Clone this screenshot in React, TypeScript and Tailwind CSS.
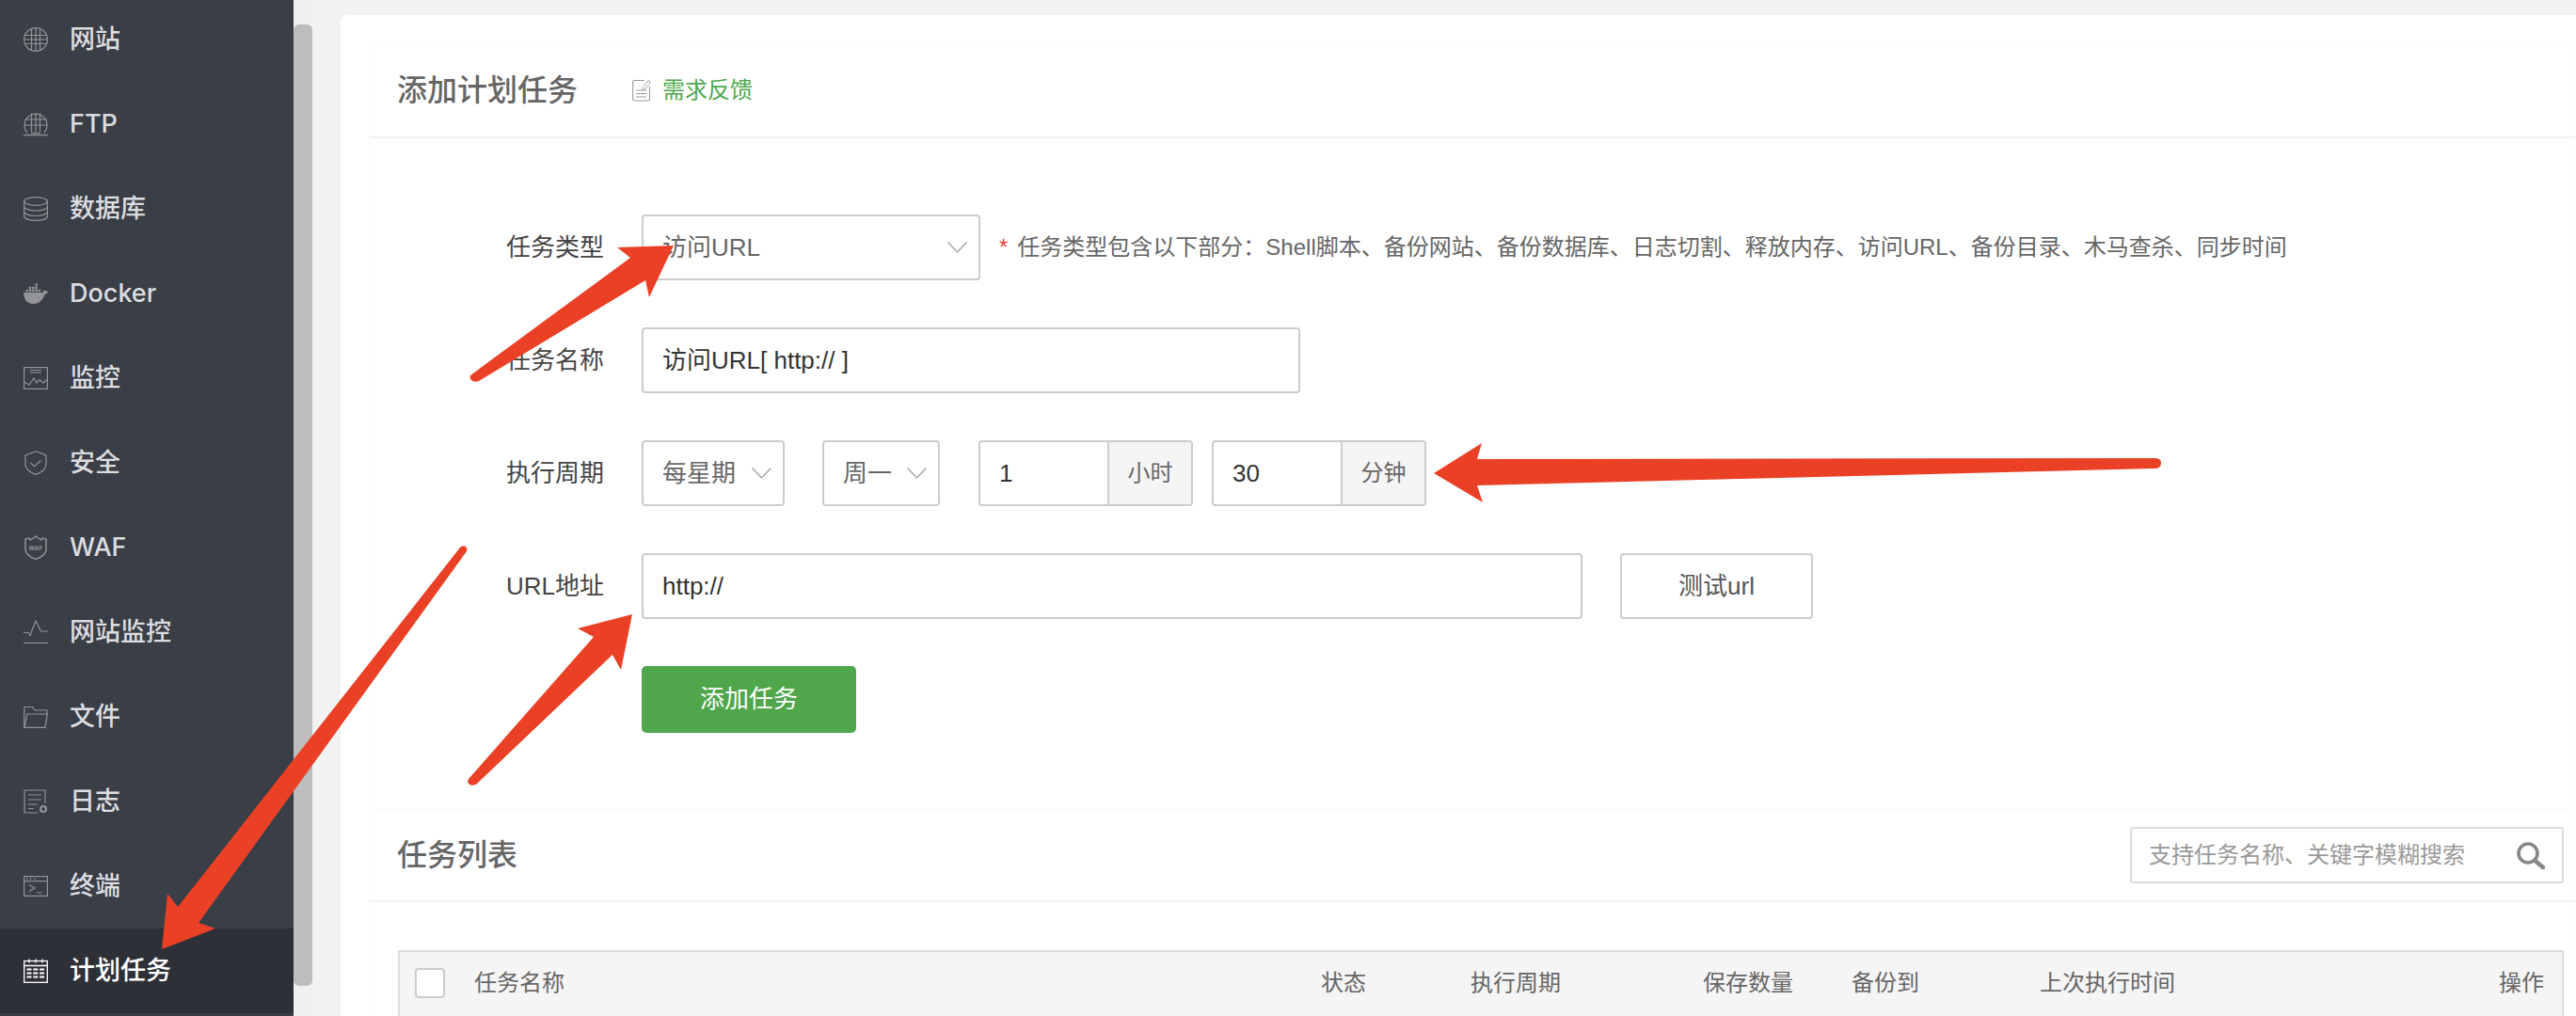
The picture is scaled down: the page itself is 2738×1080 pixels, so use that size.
import React from "react";

const S = { fill: "none", stroke: "currentColor", strokeWidth: 1.2 };

const Ico = ({ children }: { children: React.ReactNode }) => (
  <svg width="26" height="26" viewBox="0 0 26 26" className="shrink-0">
    {children}
  </svg>
);

const icons: Record<string, React.ReactNode> = {
  globe: (
    <Ico>
      <g {...S}>
        <circle cx="13" cy="13" r="12.4" />
        <path d="M1.5 8.5H24.500M.8 13H25.200M1.500 17.500H24.500" />
        <path d="M8.500 1.500V24.500M13 .8V25.200M17.500 1.500V24.500" />
      </g>
    </Ico>
  ),
  ftp: (
    <Ico>
      <g {...S}>
        <path d="M4 22A12 12 0 1 1 22 22" />
        <path d="M1.500 8H24.500M1 14H25M8.500 1.500V21M13 1V21M17.500 1.500V21" />
        <path d="M0 24.500H26" strokeWidth="1.4" />
        <path d="M8 22.500H18" strokeWidth="1.4" />
      </g>
    </Ico>
  ),
  db: (
    <Ico>
      <g {...S}>
        <ellipse cx="13" cy="5" rx="12.400" ry="4.300" />
        <path d="M.6 5V21C.6 23.500 6 25.400 13 25.400S25.400 23.500 25.400 21V5" />
        <path d="M.6 10.500C.6 13 6 15 13 15S25.400 13 25.400 10.500" />
        <path d="M.6 16C.6 18.500 6 20.500 13 20.500S25.400 18.500 25.400 16" />
      </g>
    </Ico>
  ),
  docker: (
    <Ico>
      <g fill="currentColor">
        <path d="M0 12H20.500C21 12 21.500 11 21.300 9.500C23 9.300 25 10.300 26 11.500C25.200 13 23.800 13.800 22.400 14C20.500 20 16.500 24 10.500 24C3.500 24 .2 18.500 0 12Z" />
        <path d="M2.500 8.800h2.500v2.500H2.500zM5.800 8.800h2.500v2.500H5.800zM9.100 8.800h2.500v2.500H9.100zM12.400 8.800h2.500v2.500h-2.500zM15.700 8.800h2.500v2.500h-2.500zM5.800 5.700h2.500v2.500H5.800zM9.100 5.700h2.500v2.500H9.100zM12.400 5.700h2.500v2.500h-2.500zM12.400 2.600h2.500v2.500h-2.500z" />
      </g>
    </Ico>
  ),
  monitor: (
    <Ico>
      <g {...S}>
        <rect x=".6" y="1.600" width="24.800" height="22.800" />
        <path d="M7 4.500H19M7 7H19" />
        <path d="M.6 17L6 20L11 13L14 18L17 14.500L21 18L25.400 14.500" />
      </g>
    </Ico>
  ),
  shield: (
    <Ico>
      <g {...S}>
        <path d="M13 .8L24 5V14.500C24 20 18.500 23.500 13 25.400C7.500 23.500 2 20 2 14.500V5Z" />
        <path d="M7.500 13L11.500 16.800L18.500 10.500" />
      </g>
    </Ico>
  ),
  waf: (
    <Ico>
      <g {...S}>
        <path d="M2 4L6 3L7.500 5L11 2.500L13 1L15 2.500L18.500 5L20 3L24 4V15C24 20.500 18.500 23.500 13 25.400C7.500 23.500 2 20.500 2 15Z" strokeWidth="1.500" />
      </g>
      <text x="13" y="15.500" textAnchor="middle" fontSize="6.500" fontWeight="700" fill="currentColor" fontFamily="Liberation Sans, sans-serif">
        WAF
      </text>
    </Ico>
  ),
  pulse: (
    <Ico>
      <g {...S}>
        <path d="M0 13.500H5L7 16.500L13 1L18.500 12H26" />
        <path d="M0 24.500H26" />
      </g>
    </Ico>
  ),
  folder: (
    <Ico>
      <g {...S}>
        <path d="M.8 24.400V2.500H9.500L12 6H25V10" />
        <path d="M.8 24.400H23L25.400 10H4L.8 24.400Z" />
      </g>
    </Ico>
  ),
  log: (
    <Ico>
      <g {...S}>
        <path d="M15 25H1V1H23V15" />
        <path d="M5 6H19M5 11H19M5 16H15M5 20.500H11" />
        <circle cx="21" cy="21" r="3" strokeWidth="2.200" />
      </g>
    </Ico>
  ),
  term: (
    <Ico>
      <g {...S}>
        <rect x=".6" y="2.600" width="24.800" height="20.800" />
        <path d="M.6 7.600H25.400" />
        <path d="M6 11.500L12 15L6 18.500M14.500 20H19.500" />
      </g>
      <path d="M3 4.500h1.500V6H3zM7 4.500h1.500V6H7zM11 4.500h1.500V6H11z" fill="currentColor" />
    </Ico>
  ),
  cal: (
    <Ico>
      <g {...S} strokeWidth="1.300">
        <rect x=".7" y="2.500" width="24.600" height="22.800" />
        <path d="M.7 7.500H25.300M6 .5V4.500M13 .5V4.500M20 .5V4.500" />
        <path d="M3.500 11.500H22.500M3.500 15.500H22.500M3.500 19.500H22.500" strokeWidth="1.800" strokeDasharray="5 1.800" />
      </g>
    </Ico>
  ),
};

const nav = [
  ["网站", "globe"],
  ["FTP", "ftp"],
  ["数据库", "db"],
  ["Docker", "docker"],
  ["监控", "monitor"],
  ["安全", "shield"],
  ["WAF", "waf"],
  ["网站监控", "pulse"],
  ["文件", "folder"],
  ["日志", "log"],
  ["终端", "term"],
  ["计划任务", "cal"],
];

const Chevron = () => (
  <svg width="21" height="12" viewBox="0 0 21 12" className="shrink-0">
    <path d="M.5 .5L10.500 11L20.500 .5" fill="none" stroke="#999" strokeWidth="1.200" />
  </svg>
);

const Label = ({ children }: { children: React.ReactNode }) => (
  <div className="w-[144px] shrink-0 text-[26px] text-[#444]">{children}</div>
);

const Row = ({ label, children }: { label: string; children: React.ReactNode }) => (
  <div className="flex items-center h-[70px] mb-[50px]">
    <Label>{label}</Label>
    {children}
  </div>
);

const Select = ({ text, className }: { text: string; className: string }) => (
  <div className={"h-[70px] shrink-0 flex items-center justify-between bg-white border-2 border-[#ccc] rounded-[4px] text-[26px] text-[#666] " + className}>
    <span>{text}</span>
    <Chevron />
  </div>
);

const Addon = ({ value, unit, className }: { value: string; unit: string; className: string }) => (
  <div className={"h-[70px] w-[228px] shrink-0 flex border-2 border-[#ccc] rounded-[4px] overflow-hidden " + className}>
    <div className="w-[137px] border-r-2 border-[#ccc] flex items-center pl-[20px] text-[26px] text-[#333]">{value}</div>
    <div className="flex-1 bg-[#f5f5f5] flex items-center justify-center text-[24px] text-[#666]">{unit}</div>
  </div>
);

const Input = ({ text, className }: { text: string; className: string }) => (
  <div className={"h-[70px] shrink-0 flex items-center pl-[20px] bg-white border-2 border-[#ccc] rounded-[4px] text-[26px] text-[#333] " + className}>
    {text}
  </div>
);

const Th = ({ w, children, right }: { w: string; children: React.ReactNode; right?: boolean }) => (
  <div className={w + " shrink-0 whitespace-nowrap" + (right ? " text-right" : "")}>{children}</div>
);

export default function App() {
  return (
    <div className="relative w-[2738px] h-[1080px] overflow-hidden flex bg-[#f2f2f2] font-['Liberation_Sans','Noto_Sans_CJK_SC',sans-serif]">
      {/* sidebar */}
      <aside className="w-[312px] h-full shrink-0 bg-[#3a3e46] overflow-hidden font-['Inter','Noto_Sans_CJK_SC',sans-serif]">
        <div className="-mt-[3px]">
          {nav.map(([t, ic]) => {
            const on = t === "计划任务";
            return (
              <div
                key={t}
                className={
                  "h-[90px] flex items-center pl-[25px] gap-[23px] text-[27px] font-medium " +
                  (on ? "bg-[#2e3037] text-white" : "text-[#dcdde0]")
                }
              >
                <span className={on ? "text-white flex" : "text-[#929497] flex"}>{icons[ic]}</span>
                <span>{t}</span>
              </div>
            );
          })}
        </div>
      </aside>
      {/* scrollbar */}
      <div className="w-[20px] h-full shrink-0 bg-[#f0f0f0] pt-[26px]">
        <div className="h-[1022px] bg-[#bdbdbd] rounded-[6px]" />
      </div>
      {/* main */}
      <main className="flex-1 min-w-0 pl-[30px] pt-[16px]">
        <div className="bg-white h-[1100px] rounded-tl-[8px] pl-[30px] pt-[29px]">
          {/* add panel */}
          <section className="h-[815px] rounded-[6px] border border-[#fcfcfc]">
            <div className="h-[101px] flex items-center pl-[29px] border-b-2 border-[#f0f0f0]">
              <h1 className="text-[32px] font-medium text-[#666] w-[250px]">添加计划任务</h1>
              <svg width="20" height="24" viewBox="0 0 20 24" className="shrink-0">
                <path d="M13 1.500H2C1.200 1.500 .7 2 .7 2.800V21.500C.7 22.300 1.200 23 2 23H17C17.800 23 18.500 22.300 18.500 21.500V8" fill="none" stroke="#999" strokeWidth="1.100" />
                <path d="M4 12H15M4 15.500H15M4 19H15" stroke="#999" strokeWidth="1.100" />
                <path d="M11 10L17 1.500L19.500 3L13.500 11L11 11.500Z" fill="none" stroke="#aaa" strokeWidth="1" />
              </svg>
              <a className="ml-[12px] text-[24px] text-[#4ca84c]">需求反馈</a>
            </div>
            <div className="pl-[145px] pt-[81px]">
              <Row label="任务类型">
                <Select text="访问URL" className="w-[360px] pl-[20px] pr-[12px]" />
                <span className="ml-[20px] text-[24px] text-[#f44336] leading-none">*</span>
                <span className="ml-[10px] text-[24px] text-[#666] whitespace-nowrap">
                  任务类型包含以下部分：Shell脚本、备份网站、备份数据库、日志切割、释放内存、访问URL、备份目录、木马查杀、同步时间
                </span>
              </Row>
              <Row label="任务名称">
                <Input text="访问URL[ http:// ]" className="w-[700px]" />
              </Row>
              <Row label="执行周期">
                <Select text="每星期" className="w-[152px] pl-[20px] pr-[12px]" />
                <Select text="周一" className="w-[125px] ml-[40px] pl-[20px] pr-[12px]" />
                <Addon value="1" unit="小时" className="ml-[41px]" />
                <Addon value="30" unit="分钟" className="ml-[20px]" />
              </Row>
              <Row label="URL地址">
                <Input text="http://" className="w-[1000px]" />
                <div className="w-[205px] h-[70px] ml-[40px] shrink-0 flex items-center justify-center border-2 border-[#ccc] rounded-[4px] text-[26px] text-[#555]">
                  测试url
                </div>
              </Row>
              <div className="flex">
                <div className="w-[144px] shrink-0" />
                <button className="w-[228px] h-[71px] bg-[#50a64b] rounded-[5px] text-white text-[26px]">添加任务</button>
              </div>
            </div>
          </section>
          {/* list panel */}
          <section className="rounded-[6px] border border-[#fcfcfc]">
            <div className="h-[98px] flex items-center justify-between pl-[29px] pr-[12px] border-b-2 border-[#f0f0f0]">
              <h2 className="text-[32px] font-medium text-[#666]">任务列表</h2>
              <div className="w-[461px] h-[60px] flex items-center justify-between pl-[18px] pr-[18px] border-2 border-[#dcdde4] rounded-[3px] bg-white">
                <span className="text-[24px] text-[#999]">支持任务名称、关键字模糊搜索</span>
                <svg width="31" height="29" viewBox="0 0 31 29" className="shrink-0">
                  <circle cx="13" cy="12" r="10" fill="none" stroke="#888" strokeWidth="3.600" />
                  <path d="M20 19.500L29 27" stroke="#888" strokeWidth="4.500" strokeLinecap="round" />
                </svg>
              </div>
            </div>
            <div className="pl-[30px] pt-[51px]">
              <div className="w-[2302px] h-[120px] bg-[#f5f5f5] border-2 border-[#ddd] border-b-0 pl-[16px] text-[24px] text-[#666]">
                <div className="h-[65px] flex items-center">
                  <Th w="w-[63px]">
                    <div className="w-[32px] h-[32px] bg-white border-2 border-[#ccc] rounded-[4px]" />
                  </Th>
                  <Th w="w-[900px]">任务名称</Th>
                  <Th w="w-[159px]">状态</Th>
                  <Th w="w-[247px]">执行周期</Th>
                  <Th w="w-[158px]">保存数量</Th>
                  <Th w="w-[200px]">备份到</Th>
                  <Th w="w-[488px]">上次执行时间</Th>
                  <Th w="w-[48px]" right>操作</Th>
                </div>
              </div>
            </div>
          </section>
        </div>
      </main>
      {/* annotation arrows */}
      <svg className="absolute inset-0 pointer-events-none" width="2738" height="1080" viewBox="0 0 2738 1080">
        <g fill="#ea4126">
          <path d="M500 399L670 274L656 263L716 261L690 316L686 298L509 405Q504 407 501 404Q499 402 500 399Z" />
          <path d="M1524 503L1575 471L1570 488L2290 487Q2297 487 2297 492Q2297 498 2290 498L1570 516L1576 534Z" />
          <path d="M498 828L631 677L614 668L672 653L660 712L651 696L507 833Q503 836 499 834Q496 831 498 828Z" />
          <path d="M489 582Q492 579 495 581Q497 583 496 586L211 981L229 987L172 1009L178 950L189 964Z" />
        </g>
      </svg>
    </div>
  );
}
